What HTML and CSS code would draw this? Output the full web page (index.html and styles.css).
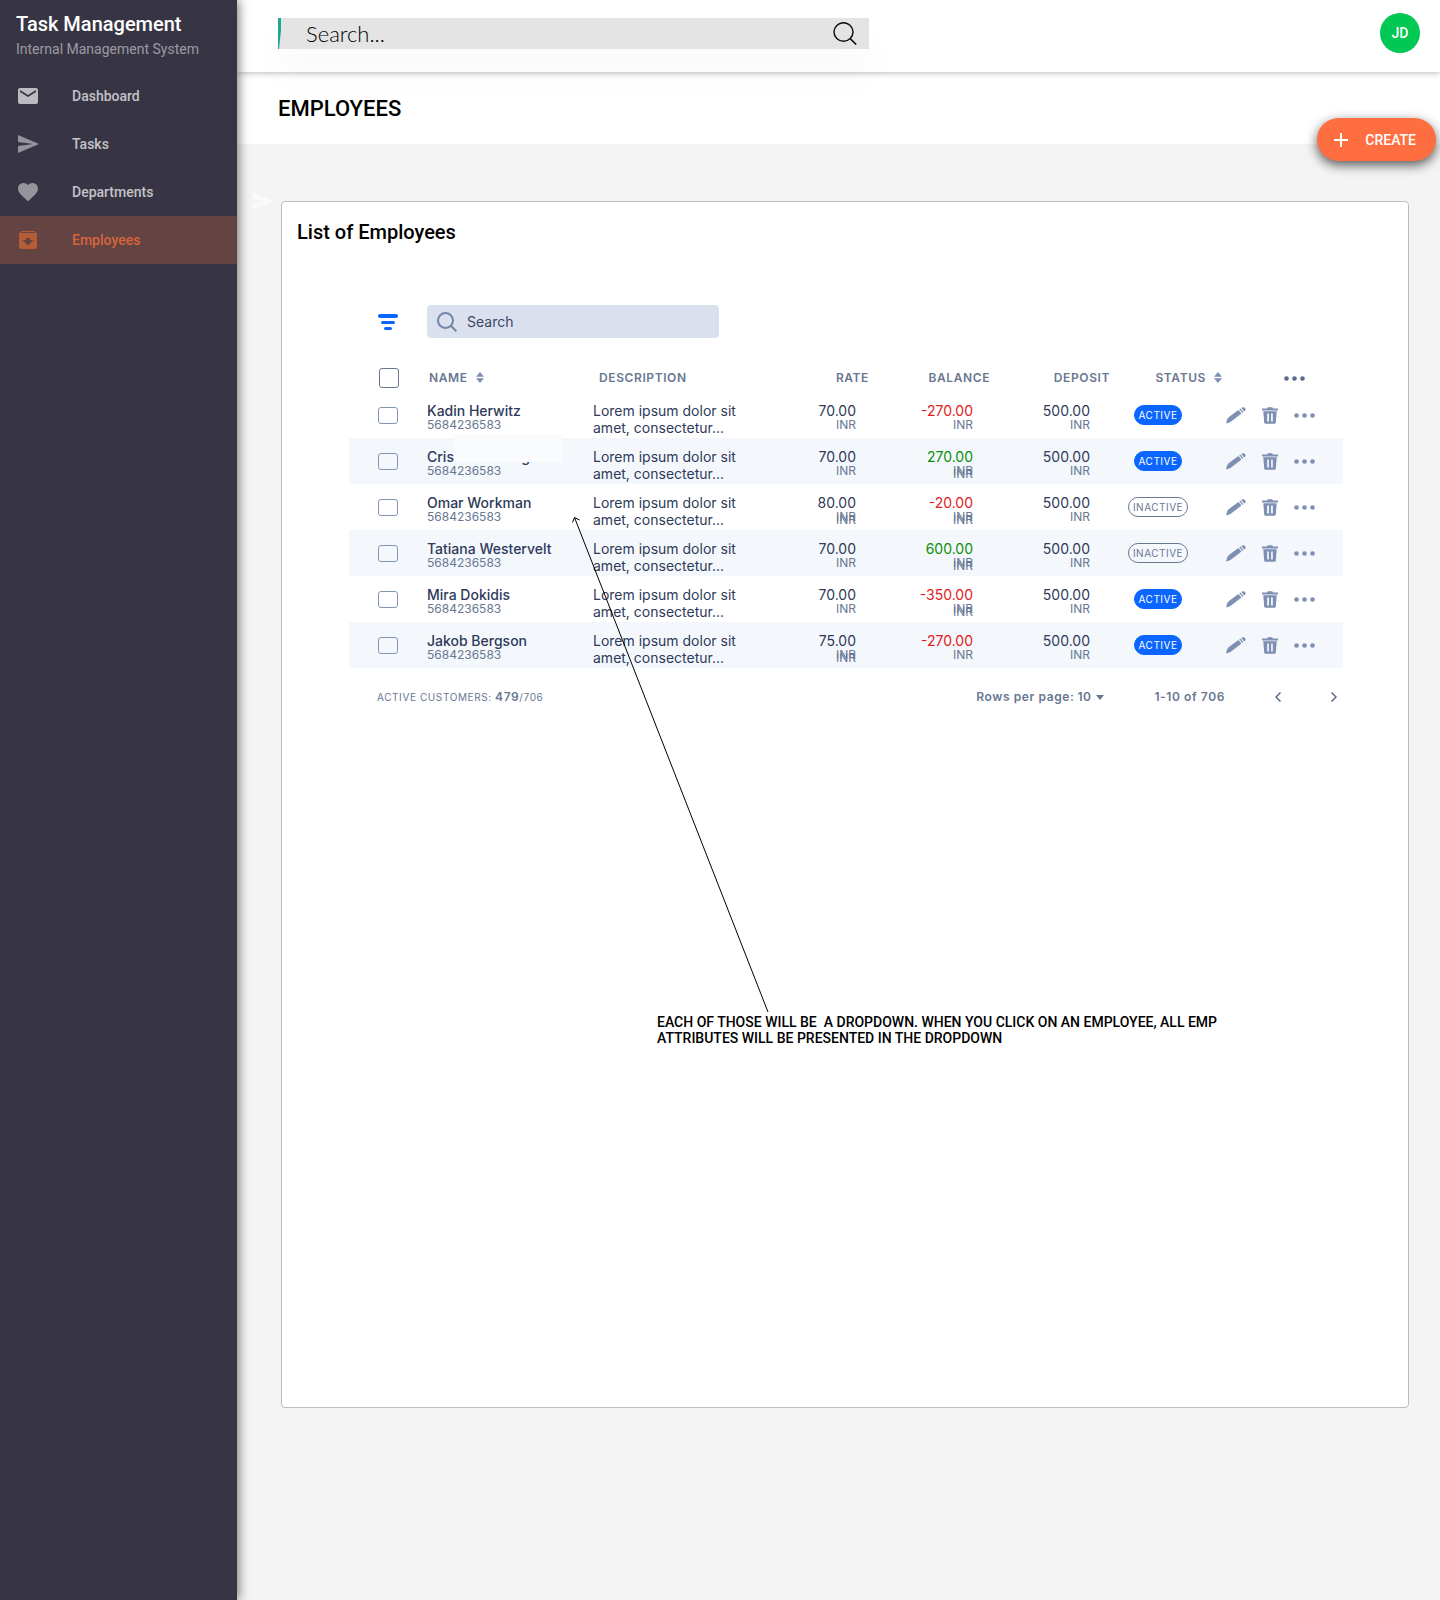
FILE: index.html
```html
<!DOCTYPE html>
<html lang="en">
<head>
<meta charset="utf-8">
<meta name="viewport" content="width=device-width, initial-scale=1">
<title>Employees - Task Management</title>
<link rel="stylesheet" href="styles.css">
</head>
<body>
<svg class="sprite" aria-hidden="true">
  <symbol id="i-send" viewBox="0 0 24 24"><path d="M2 21l21-9L2 3v7l15 2-15 2z"/></symbol>
  <symbol id="i-pencil" viewBox="0 0 20 17"><path d="M0 16.500L1.200 12.200 2.600 10.300 12.400 2.900 15.500 6.600 5.400 14.200 3.300 15.400zM13.300 2.300L14.400 1.500 17.400 5.200 16.400 6zM15.200.9C16.500 0 17.800-.1 18.800.8 19.900 1.800 20 3.200 18.300 4.500z"/></symbol>
  <symbol id="i-trash" viewBox="0 0 16 17"><path d="M0 1.400h5L5.800.2h4.400L11 1.400h5v2H0z"/><path fill-rule="evenodd" d="M1.300 4.300h13.400l-.9 11.200q-.1 1.300-1.500 1.300H3.700q-1.400 0-1.500-1.300zM5.200 6.500v8h1.700v-8zm3.900 0v8h1.700v-8z"/></symbol>
  <symbol id="i-dots" viewBox="0 0 21 5"><circle cx="2.500" cy="2.500" r="2.300"/><circle cx="10.500" cy="2.500" r="2.300"/><circle cx="18.500" cy="2.500" r="2.300"/></symbol>
  <symbol id="i-sort" viewBox="0 0 8 11"><path d="M4 0l4 4.800H0zM4 11l4-4.800H0z"/></symbol>
</svg>
<div class="app">
  <aside class="sidebar">
    <header class="brand">
      <p class="brand-name">Task Management</p>
      <p class="brand-sub">Internal Management System</p>
    </header>
    <nav class="nav">
      <a class="nav-link mail" href="#dashboard"><svg class="nav-icon" viewBox="0 0 24 24"><path d="M20 4H4c-1.100 0-2 .9-2 2v12c0 1.100.9 2 2 2h16c1.100 0 2-.9 2-2V6c0-1.100-.9-2-2-2zm0 4l-8 5-8-5V6l8 5 8-5z"/></svg>Dashboard</a>
      <a class="nav-link" href="#tasks"><svg class="nav-icon"><use href="#i-send"/></svg>Tasks</a>
      <a class="nav-link" href="#departments"><svg class="nav-icon" viewBox="0 0 24 24"><path d="M12 21.350l-1.450-1.320C5.400 15.360 2 12.280 2 8.500 2 5.420 4.420 3 7.500 3c1.740 0 3.410.81 4.500 2.090C13.090 3.810 14.760 3 16.500 3 19.580 3 22 5.420 22 8.500c0 3.780-3.400 6.860-8.550 11.540z"/></svg>Departments</a>
      <a class="nav-link active" href="#employees" aria-current="page"><svg class="nav-icon" viewBox="0 0 24 24"><path d="M20.540 5.230l-1.390-1.680C18.880 3.210 18.470 3 18 3H6c-.47 0-.88.210-1.160.55L3.460 5.230C3.170 5.570 3 6.020 3 6.500V19c0 1.100.9 2 2 2h14c1.100 0 2-.9 2-2V6.500c0-.48-.17-.93-.46-1.270zM12 17.500L6.500 12H10v-2h4v2h3.500zM5.120 5l.81-1h12l.94 1z"/></svg>Employees</a>
    </nav>
  </aside>

  <div class="page">
    <header class="topbar">
      <form class="site-search" role="search">
        <svg class="wedge" viewBox="0 0 3 31"><path d="M0 0h3v12L1 31H0z"/></svg>
        <input class="site-input" type="search" placeholder="Search..." aria-label="Search the site">
        <button class="icon-button" type="button" aria-label="Search"><svg class="site-lens" viewBox="0 0 24 23"><ellipse cx="10.500" cy="10" rx="9.500" ry="9.300"/><path d="M17.200 16.600l6 6"/></svg></button>
      </form>
      <button class="avatar" type="button">JD</button>
    </header>

    <div class="titlebar">
      <h1 class="title">EMPLOYEES</h1>
      <button class="create" type="button"><svg class="plus" viewBox="0 0 14 14"><path d="M7 0v14M0 7h14"/></svg>CREATE</button>
    </div>

    <main class="content">
      <svg class="ghost"><use href="#i-send"/></svg>
      <section class="card">
        <h2 class="card-title">List of Employees</h2>

        <div class="listing">
          <div class="tools">
            <button class="icon-button" type="button" aria-label="Filter"><svg class="filter" viewBox="0 0 20 16"><rect width="20" height="4" rx="2"/><rect x="3" y="7" width="14" height="3" rx="1.500"/><rect x="6" y="13" width="8" height="3" rx="1.500"/></svg></button>
            <label class="list-search"><svg class="lens" viewBox="0 0 20 20"><circle cx="8.500" cy="8.500" r="7.500"/><path d="M13.800 13.800l5.500 5.500"/></svg><input class="list-input" type="search" placeholder="Search" aria-label="Search employees"></label>
          </div>

          <table class="table">
            <colgroup><col class="c-check"><col class="c-name"><col class="c-desc"><col class="c-rate"><col class="c-balance"><col class="c-deposit"><col class="c-status"><col class="c-actions"></colgroup>
            <thead>
              <tr>
                <th class="check"><input class="box box-all" type="checkbox" aria-label="Select all"></th>
                <th class="h-name">NAME<svg class="sort"><use href="#i-sort"/></svg></th>
                <th class="h-desc">DESCRIPTION</th>
                <th class="h-rate">RATE</th>
                <th class="h-num">BALANCE</th>
                <th class="h-num">DEPOSIT</th>
                <th class="h-num">STATUS<svg class="sort"><use href="#i-sort"/></svg></th>
                <th class="h-more"><button class="icon-button" type="button" aria-label="Columns"><svg class="dots"><use href="#i-dots"/></svg></button></th>
              </tr>
            </thead>
            <tbody>
              <tr>
                <td class="check"><input class="box" type="checkbox" aria-label="Select Kadin Herwitz"></td>
                <td><span class="name">Kadin Herwitz</span><span class="sub">5684236583</span></td>
                <td class="desc">Lorem ipsum dolor sit<br>amet, consectetur...</td>
                <td class="num"><span class="amount">70.00</span><span class="sub">INR</span></td>
                <td class="num"><span class="amount minus">-270.00</span><span class="sub">INR</span></td>
                <td class="num deposit"><span class="amount">500.00</span><span class="sub">INR</span></td>
                <td class="status"><span class="pill on">ACTIVE</span></td>
                <td class="actions"><div class="action-set"><button class="icon-button" type="button" aria-label="Edit"><svg class="pencil"><use href="#i-pencil"/></svg></button><button class="icon-button" type="button" aria-label="Delete"><svg class="trash"><use href="#i-trash"/></svg></button><button class="icon-button" type="button" aria-label="More"><svg class="dots"><use href="#i-dots"/></svg></button></div></td>
              </tr>
              <tr>
                <td class="check"><input class="box" type="checkbox" aria-label="Select Cris Rosenberg"></td>
                <td class="covered"><span class="name">Cris Rosenberg</span><span class="sub">5684236583</span></td>
                <td class="desc">Lorem ipsum dolor sit<br>amet, consectetur...</td>
                <td class="num"><span class="amount">70.00</span><span class="sub">INR</span></td>
                <td class="num"><span class="amount plus-sum">270.00</span><span class="sub">INR</span><span class="sub again">INR</span></td>
                <td class="num deposit"><span class="amount">500.00</span><span class="sub">INR</span></td>
                <td class="status"><span class="pill on">ACTIVE</span></td>
                <td class="actions"><div class="action-set"><button class="icon-button" type="button" aria-label="Edit"><svg class="pencil"><use href="#i-pencil"/></svg></button><button class="icon-button" type="button" aria-label="Delete"><svg class="trash"><use href="#i-trash"/></svg></button><button class="icon-button" type="button" aria-label="More"><svg class="dots"><use href="#i-dots"/></svg></button></div></td>
              </tr>
              <tr>
                <td class="check"><input class="box" type="checkbox" aria-label="Select Omar Workman"></td>
                <td><span class="name">Omar Workman</span><span class="sub">5684236583</span></td>
                <td class="desc">Lorem ipsum dolor sit<br>amet, consectetur...</td>
                <td class="num"><span class="amount">80.00</span><span class="sub">INR</span><span class="sub again">INR</span></td>
                <td class="num"><span class="amount minus">-20.00</span><span class="sub">INR</span><span class="sub again">INR</span></td>
                <td class="num deposit"><span class="amount">500.00</span><span class="sub">INR</span></td>
                <td class="status"><span class="pill">INACTIVE</span></td>
                <td class="actions"><div class="action-set"><button class="icon-button" type="button" aria-label="Edit"><svg class="pencil"><use href="#i-pencil"/></svg></button><button class="icon-button" type="button" aria-label="Delete"><svg class="trash"><use href="#i-trash"/></svg></button><button class="icon-button" type="button" aria-label="More"><svg class="dots"><use href="#i-dots"/></svg></button></div></td>
              </tr>
              <tr>
                <td class="check"><input class="box" type="checkbox" aria-label="Select Tatiana Westervelt"></td>
                <td><span class="name">Tatiana Westervelt</span><span class="sub">5684236583</span></td>
                <td class="desc">Lorem ipsum dolor sit<br>amet, consectetur...</td>
                <td class="num"><span class="amount">70.00</span><span class="sub">INR</span></td>
                <td class="num"><span class="amount plus-sum">600.00</span><span class="sub">INR</span><span class="sub again">INR</span></td>
                <td class="num deposit"><span class="amount">500.00</span><span class="sub">INR</span></td>
                <td class="status"><span class="pill">INACTIVE</span></td>
                <td class="actions"><div class="action-set"><button class="icon-button" type="button" aria-label="Edit"><svg class="pencil"><use href="#i-pencil"/></svg></button><button class="icon-button" type="button" aria-label="Delete"><svg class="trash"><use href="#i-trash"/></svg></button><button class="icon-button" type="button" aria-label="More"><svg class="dots"><use href="#i-dots"/></svg></button></div></td>
              </tr>
              <tr>
                <td class="check"><input class="box" type="checkbox" aria-label="Select Mira Dokidis"></td>
                <td><span class="name">Mira Dokidis</span><span class="sub">5684236583</span></td>
                <td class="desc">Lorem ipsum dolor sit<br>amet, consectetur...</td>
                <td class="num"><span class="amount">70.00</span><span class="sub">INR</span></td>
                <td class="num"><span class="amount minus">-350.00</span><span class="sub">INR</span><span class="sub again">INR</span></td>
                <td class="num deposit"><span class="amount">500.00</span><span class="sub">INR</span></td>
                <td class="status"><span class="pill on">ACTIVE</span></td>
                <td class="actions"><div class="action-set"><button class="icon-button" type="button" aria-label="Edit"><svg class="pencil"><use href="#i-pencil"/></svg></button><button class="icon-button" type="button" aria-label="Delete"><svg class="trash"><use href="#i-trash"/></svg></button><button class="icon-button" type="button" aria-label="More"><svg class="dots"><use href="#i-dots"/></svg></button></div></td>
              </tr>
              <tr>
                <td class="check"><input class="box" type="checkbox" aria-label="Select Jakob Bergson"></td>
                <td><span class="name">Jakob Bergson</span><span class="sub">5684236583</span></td>
                <td class="desc">Lorem ipsum dolor sit<br>amet, consectetur...</td>
                <td class="num"><span class="amount">75.00</span><span class="sub">INR</span><span class="sub again">INR</span></td>
                <td class="num"><span class="amount minus">-270.00</span><span class="sub">INR</span></td>
                <td class="num deposit"><span class="amount">500.00</span><span class="sub">INR</span></td>
                <td class="status"><span class="pill on">ACTIVE</span></td>
                <td class="actions"><div class="action-set"><button class="icon-button" type="button" aria-label="Edit"><svg class="pencil"><use href="#i-pencil"/></svg></button><button class="icon-button" type="button" aria-label="Delete"><svg class="trash"><use href="#i-trash"/></svg></button><button class="icon-button" type="button" aria-label="More"><svg class="dots"><use href="#i-dots"/></svg></button></div></td>
              </tr>
            </tbody>
          </table>

          <footer class="pager">
            <p class="count">ACTIVE CUSTOMERS: <strong class="count-now">479</strong>/706</p>
            <div class="rows">
              <label for="rows">Rows per page:</label>
              <select class="rows-select" id="rows"><option>10</option></select>
              <svg class="caret" viewBox="0 0 8 5"><path d="M0 0h8L4 5z"/></svg>
            </div>
            <p class="range">1-10 of 706</p>
            <div class="steps">
              <button class="icon-button" type="button" aria-label="Previous page"><svg class="chevron" viewBox="0 0 6 10"><path d="M5.500.5L1 5l4.500 4.500"/></svg></button>
              <button class="icon-button" type="button" aria-label="Next page"><svg class="chevron" viewBox="0 0 6 10"><path d="M.5.500L5 5 .5 9.500"/></svg></button>
            </div>
          </footer>
        </div>

        <p class="note">EACH OF THOSE WILL BE &nbsp;A DROPDOWN. WHEN YOU CLICK ON AN EMPLOYEE, ALL EMP ATTRIBUTES WILL BE PRESENTED IN THE DROPDOWN</p>
        <svg class="arrow" viewBox="0 0 198 497"><path d="M196 496L2.500 1.500M.5 6.500L2.500 1.500 7.500 4"/></svg>
      </section>
    </main>
  </div>
</div>
</body>
</html>
```
FILE: styles.css
```css
* { box-sizing: border-box; }

body {
  margin: 0;
  background: #f4f4f4;
  color: #000;
  font-family: Roboto, "Liberation Sans", sans-serif;
  font-size: 14px;
}

h1, h2, p { margin: 0; }
button, input, select { font: inherit; color: inherit; }
svg { display: block; flex: none; fill: currentColor; }
.sprite { position: absolute; width: 0; height: 0; }

.icon-button {
  display: block;
  padding: 0;
  border: 0;
  background: none;
  cursor: pointer;
}

.app { display: flex; min-height: 100vh; }

/* Sidebar */
.sidebar {
  position: relative;
  z-index: 3;
  flex: 0 0 237px;
  background: #373544;
  box-shadow: 2px 0 10px rgba(0, 0, 0, .5);
}
.brand { height: 72px; padding: 12px 16px; }
.brand-name { color: #fff; font-size: 20px; font-weight: 500; line-height: 24px; }
.brand-sub { color: #9b9aa2; font-size: 14px; line-height: 26px; white-space: nowrap; }
.nav-link {
  display: flex;
  align-items: center;
  gap: 32px;
  height: 48px;
  padding: 0 16px;
  color: #c3c2c7;
  font-weight: 500;
  text-decoration: none;
}
.nav-icon { width: 24px; height: 24px; color: #95949d; }
.mail .nav-icon { color: #bbbac1; }
.active { background: #634442; color: #d9643c; }
.active .nav-icon { color: #b55b38; }

/* Header */
.page { flex: 1; min-width: 0; }
.topbar {
  position: relative;
  z-index: 2;
  display: flex;
  align-items: center;
  justify-content: space-between;
  gap: 24px;
  height: 72px;
  padding: 0 20px 6px 41px;
  background: #fff;
  box-shadow: 0 1px 6px rgba(0, 0, 0, .28);
}
.site-search {
  display: flex;
  align-items: center;
  flex: 0 1 591px;
  height: 31px;
  padding-right: 12px;
  background: #e4e4e4;
  box-shadow: 0 24px 40px rgba(0, 0, 0, .03);
}
.wedge { width: 3px; height: 31px; color: #1ba88c; }
.site-input {
  flex: 1;
  min-width: 0;
  padding: 0 0 0 25px;
  border: 0;
  outline: 0;
  background: none;
  font-family: Lato, sans-serif;
  font-size: 22px;
  font-weight: 300;
}
.site-input::placeholder { color: #000; opacity: 1; }
.site-lens { width: 24px; height: 23px; fill: none; stroke: #111; stroke-width: 1.500; }
.avatar {
  width: 40px;
  height: 40px;
  padding: 0;
  border: 0;
  border-radius: 50%;
  background: #00c853;
  color: #fff;
  font-weight: 500;
}
.titlebar {
  position: relative;
  display: flex;
  align-items: center;
  height: 72px;
  padding: 2px 41px 0;
  background: #fff;
}
.title { font-size: 22px; font-weight: 500; line-height: 26px; }
.create {
  position: absolute;
  right: 4px;
  bottom: -17px;
  display: flex;
  align-items: center;
  gap: 17px;
  height: 43px;
  padding: 0 20px 0 17px;
  border: 0;
  border-radius: 22px;
  background: #ff6e40;
  box-shadow: 0 4px 12px rgba(0, 0, 0, .65);
  color: #fff;
  font-weight: 500;
}
.plus { width: 14px; height: 14px; stroke: #fff; stroke-width: 2; }

/* Card */
.content { position: relative; padding: 57px 31px 192px 44px; }
.ghost { position: absolute; top: 45px; left: 13px; width: 24px; height: 24px; color: #fafafa; }
.card {
  position: relative;
  min-height: 1207px;
  padding: 19px 65px 60px 67px;
  border: 1px solid #bdbdbd;
  border-radius: 4px;
  background: #fff;
}
.card-title { margin-left: -52px; font-size: 20px; font-weight: 500; line-height: 22px; }
.listing {
  margin-top: 62px;
  color: #2e3a59;
  font-family: Inter, "Liberation Sans", sans-serif;
}
.tools { display: flex; align-items: center; gap: 29px; padding-left: 29px; }
.filter { width: 20px; height: 16px; color: #0a66ff; }
.list-search {
  display: flex;
  align-items: center;
  gap: 10px;
  width: 292px;
  height: 33px;
  padding: 0 10px;
  border-radius: 4px;
  background: #dae0ed;
}
.lens { width: 20px; height: 20px; fill: none; stroke: #7286a8; stroke-width: 2; }
.list-input { flex: 1; min-width: 0; padding: 0; border: 0; outline: 0; background: none; }
.list-input::placeholder { color: #3c4866; opacity: 1; }

/* Table */
.table { width: 100%; margin-top: 26px; border-collapse: collapse; table-layout: fixed; }
.c-check { width: 78px; }
.c-name { width: 166px; }
.c-desc { width: 167px; }
.c-rate { width: 113px; }
.c-balance { width: 117px; }
.c-deposit { width: 120px; }
.c-status { width: 112px; }
.c-actions { width: 121px; }
th {
  height: 28px;
  padding: 0;
  color: #687792;
  font-size: 12px;
  font-weight: 600;
  letter-spacing: .05em;
  line-height: 16px;
  text-align: left;
  white-space: nowrap;
}
td { height: 46px; padding: 11px 0 0; vertical-align: top; }
tbody tr:nth-child(even) { background: #f4f7fc; }
.check { padding: 0 0 0 29px; vertical-align: middle; }
.box {
  display: block;
  width: 20px;
  height: 17px;
  margin: 0;
  appearance: none;
  border: 1px solid #8494b4;
  border-radius: 3px;
}
.box-all { height: 20px; margin-left: 1px; border-color: #687792; }
.h-name { padding-left: 2px; }
.h-desc { padding-left: 6px; }
.h-rate { padding-right: 4px; text-align: right; }
.h-num { text-align: right; }
.h-more { padding-left: 62px; color: #5b6b8c; }
.sort { display: inline-block; width: 8px; height: 11px; margin-left: 8px; color: #7d8fb3; vertical-align: -1px; }
.name, .amount { display: block; line-height: 16px; }
.name { font-weight: 500; }
.sub { display: block; color: #687792; font-size: 12px; line-height: 12px; }
.again { margin-top: -9px; }
.desc { padding-top: 10px; line-height: 17px; }
.num { padding-right: 17px; text-align: right; }
.deposit { padding-right: 20px; }
.minus { color: #e02020; }
.plus-sum { color: #0a8f0a; }
.covered { position: relative; }
.covered::after {
  content: "";
  position: absolute;
  top: -4px;
  left: 27px;
  width: 108px;
  height: 28px;
  background: #fafbfc;
}
.status { padding: 0 16px 0 0; text-align: center; vertical-align: middle; }
.pill {
  display: inline-block;
  padding: 0 4px;
  border: 1px solid #687792;
  border-radius: 10px;
  color: #687792;
  font-size: 10px;
  letter-spacing: .05em;
  line-height: 18px;
  vertical-align: middle;
}
.on { border-color: #0a66ff; background: #0a66ff; color: #fff; }
.actions { padding: 0 0 0 4px; vertical-align: middle; }
.action-set { display: flex; align-items: center; gap: 16px; color: #7d8fb3; }
.pencil { width: 20px; height: 17px; }
.trash { width: 16px; height: 17px; }
.dots { width: 21px; height: 5px; }

/* Footer */
.pager {
  display: flex;
  align-items: center;
  margin-top: 20px;
  padding: 0 6px 0 28px;
  color: #687792;
  font-size: 12px;
  font-weight: 600;
  letter-spacing: .05em;
  line-height: 18px;
}
.count { flex: 1; font-size: 10px; font-weight: 400; }
.count-now { font-size: 12px; font-weight: 600; }
.rows { display: flex; align-items: center; gap: 3px; margin-right: 50px; }
.rows-select { width: 16px; padding: 0; border: 0; background: none; appearance: none; letter-spacing: inherit; }
.caret { width: 8px; height: 5px; }
.range { margin-right: 50px; }
.steps { display: flex; gap: 50px; }
.chevron { width: 6px; height: 10px; fill: none; stroke: #5b6b8c; stroke-width: 1.500; }

/* Annotation */
.note { width: 575px; margin: 308px 0 0 308px; font-weight: 500; line-height: 16px; }
.arrow {
  position: absolute;
  top: 314px;
  left: 290px;
  width: 198px;
  height: 497px;
  fill: none;
  stroke: #000;
  pointer-events: none;
}
```
